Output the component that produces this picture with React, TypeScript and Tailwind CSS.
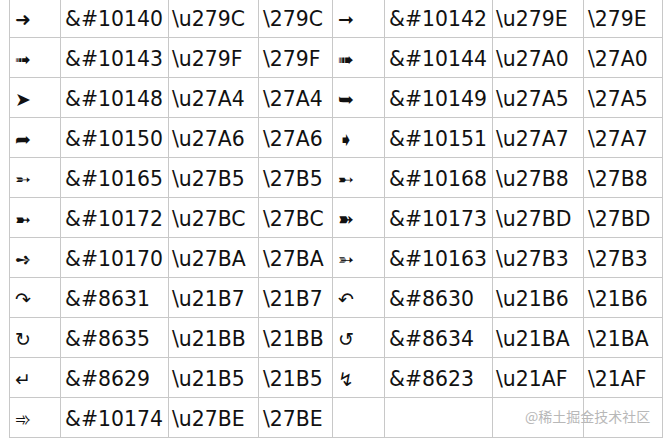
const rows: [string, string, string, string][] = [
  ['\u279C', '&#10140', '\\u279C', '\\279C'],
  ['\u279E', '&#10142', '\\u279E', '\\279E'],
  ['\u279F', '&#10143', '\\u279F', '\\279F'],
  ['\u27A0', '&#10144', '\\u27A0', '\\27A0'],
  ['\u27A4', '&#10148', '\\u27A4', '\\27A4'],
  ['\u27A5', '&#10149', '\\u27A5', '\\27A5'],
  ['\u27A6', '&#10150', '\\u27A6', '\\27A6'],
  ['\u27A7', '&#10151', '\\u27A7', '\\27A7'],
  ['\u27B5', '&#10165', '\\u27B5', '\\27B5'],
  ['\u27B8', '&#10168', '\\u27B8', '\\27B8'],
  ['\u27BC', '&#10172', '\\u27BC', '\\27BC'],
  ['\u27BD', '&#10173', '\\u27BD', '\\27BD'],
  ['\u27BA', '&#10170', '\\u27BA', '\\27BA'],
  ['\u27B3', '&#10163', '\\u27B3', '\\27B3'],
  ['\u21B7', '&#8631', '\\u21B7', '\\21B7'],
  ['\u21B6', '&#8630', '\\u21B6', '\\21B6'],
  ['\u21BB', '&#8635', '\\u21BB', '\\21BB'],
  ['\u21BA', '&#8634', '\\u21BA', '\\21BA'],
  ['\u21B5', '&#8629', '\\u21B5', '\\21B5'],
  ['\u21AF', '&#8623', '\\u21AF', '\\21AF'],
  ['\u27BE', '&#10174', '\\u27BE', '\\27BE'],
];

// pairs of entries per table row
const pairs: ([string, string, string, string] | null)[][] = [];
for (let i = 0; i < rows.length; i += 2) {
  pairs.push([rows[i], rows[i + 1] ?? null]);
}

function Cells({ r }: { r: [string, string, string, string] | null }) {
  if (!r) {
    return (
      <>
        <td className="border border-[#c8c8c8]" />
        <td className="border border-[#c8c8c8]" />
        <td className="border border-[#c8c8c8]" />
        <td className="border border-[#c8c8c8]" />
      </>
    );
  }
  return (
    <>
      <td className="border border-[#c8c8c8] pl-[5px] pt-[3px] text-[19px] leading-none">{r[0]}</td>
      <td className="border border-[#c8c8c8] pl-[4px] pt-[2px]">{r[1]}</td>
      <td className="border border-[#c8c8c8] pl-[3px] pt-[2px]">{r[2]}</td>
      <td className="border border-[#c8c8c8] pl-[4px] pt-[2px]">{r[3]}</td>
    </>
  );
}

export default function App() {
  return (
    <div className="relative w-[664px] h-[444px] overflow-hidden bg-white">
      <table
        className="ml-[9px] mt-[-3px] border-collapse table-fixed text-[20.4px] leading-[24px] text-[#111] whitespace-nowrap"
        style={{ fontFamily: '"DejaVu Sans", Verdana, sans-serif' }}
      >
        <colgroup>
          <col className="w-[51px]" />
          <col className="w-[108px]" />
          <col className="w-[90px]" />
          <col className="w-[74px]" />
          <col className="w-[52px]" />
          <col className="w-[108px]" />
          <col className="w-[91px]" />
          <col className="w-[79px]" />
        </colgroup>
        <tbody>
          {pairs.map((p, i) => (
            <tr key={i} className="h-[40px]">
              <Cells r={p[0]} />
              <Cells r={p[1]} />
            </tr>
          ))}
        </tbody>
      </table>
      {/* watermark */}
      <div
        className="absolute left-[525px] top-[406px] text-[14px] text-[#b8b8b8]"
        style={{ fontFamily: '"Noto Sans CJK SC", sans-serif' }}
      >
        @稀土掘金技术社区
      </div>
    </div>
  );
}
